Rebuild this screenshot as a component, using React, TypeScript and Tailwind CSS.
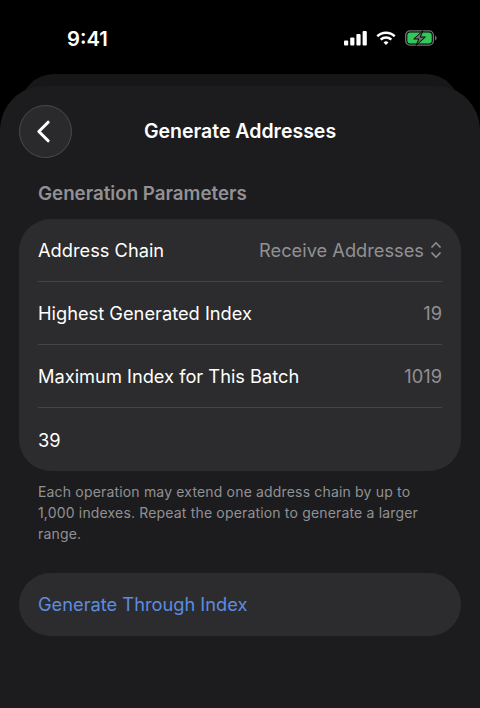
import { ChevronLeft } from "lucide-react";

function StatusBar() {
  return (
    <div className="flex h-[74px] items-start justify-between pl-[67px] pr-[43px] pt-[26px]">
      <span className="text-[20.25px] font-semibold leading-[26px] text-white">9:41</span>
      <div className="mt-[4px] flex items-center gap-[9px]">
        <svg width="23" height="15" viewBox="0 0 23 15" fill="white">
          <rect x="0" y="9.5" width="4.2" height="5" rx="1" />
          <rect x="6.2" y="6.5" width="4.2" height="8" rx="1" />
          <rect x="12.4" y="3" width="4.2" height="11.5" rx="1" />
          <rect x="18.6" y="0" width="4.2" height="14.5" rx="1" />
        </svg>
        <svg width="20" height="15" viewBox="0 0 21 16" fill="none" stroke="white" strokeWidth="2.6">
          <path d="M1.2 5.6a13.5 13.5 0 0 1 18.6 0" />
          <path d="M4.8 9.2a8.4 8.4 0 0 1 11.4 0" />
          <path d="M10.5 15 7.9 12.3a3.7 3.7 0 0 1 5.2 0Z" fill="white" stroke="none" />
        </svg>
        <svg width="32" height="16" viewBox="0 0 33 16" fill="none">
          <rect x="0.7" y="0.7" width="28.6" height="14.6" rx="4.4" stroke="#6f7571" strokeWidth="1.3" />
          <rect x="2.4" y="2.4" width="25.2" height="11.2" rx="3" fill="#34c759" />
          <path d="M31 5.5c1 .4 1.6 1.3 1.6 2.5s-.6 2.1-1.6 2.5Z" fill="#6f7571" />
          <path d="M18.5 0.5 9 9h5.2l-2.7 6.5L21 7h-5.2Z" fill="#6a6f6c" stroke="#000" strokeWidth="1" />
        </svg>
      </div>
    </div>
  );
}

function Row({ label, value, chevron }: { label: string; value?: string; chevron?: boolean }) {
  return (
    <div className="flex h-[63px] items-center justify-between border-b border-[#454547] last:border-b-0">
      <span className="text-white">{label}</span>
      {value ? (
        <span className="flex items-center gap-[6px] text-[#919194]">
          {value}
          {chevron ? (
            <svg width="12" height="18" viewBox="0 0 12 18" fill="none" stroke="#919194" strokeWidth="1.6">
              <path d="M1.5 6.5 6 1.8l4.5 4.7" />
              <path d="M1.5 11.5 6 16.2l4.5-4.7" />
            </svg>
          ) : null}
        </span>
      ) : null}
    </div>
  );
}

export default function App() {
  return (
    <div
      className="relative h-[708px] w-[480px] overflow-hidden bg-black text-[18.25px] leading-[26px] text-white"
      style={{ fontFamily: "Inter, 'Liberation Sans', sans-serif" }}
    >
      <StatusBar />
      {/* sheet behind the current one */}
      <div className="mx-[20px] h-[40px] rounded-t-[34px] bg-[#171718]" />
      <div className="absolute inset-x-0 bottom-0 top-[86px] rounded-t-[44px] bg-[#1c1c1e] px-[19px]">
        <div className="relative flex h-[91px] items-center justify-center pb-[2px]">
          <button
            type="button"
            className="absolute left-0 top-[19px] flex h-[53px] w-[53px] items-center justify-center rounded-full border border-[#4a4a4c] bg-[#2a2a2c]"
          >
            <ChevronLeft className="mr-[5px] h-[37px] w-[37px] text-white" strokeWidth={2} />
          </button>
          <h1 className="text-[19.5px] font-semibold">Generate Addresses</h1>
        </div>
        <h2 className="mb-[12px] mt-[4px] px-[19px] text-[18.75px] font-semibold leading-[26px] text-[#919194]">
          Generation Parameters
        </h2>
        <div className="rounded-[32px] bg-[#2c2c2e] px-[19px]">
          <Row label="Address Chain" value="Receive Addresses" chevron />
          <Row label="Highest Generated Index" value="19" />
          <Row label="Maximum Index for This Batch" value="1019" />
          <Row label="39" />
        </div>
        <p className="mt-[10px] px-[19px] text-[14px] leading-[21px] tracking-[0.17px] text-[#919194]">
          Each operation may extend one address chain by up to 1,000 indexes. Repeat the operation to generate a larger
          range.
        </p>
        <button
          type="button"
          className="mt-[29px] flex h-[63px] w-full items-center rounded-[32px] bg-[#2c2c2e] px-[19px] pb-[2px] text-[#5d8ce0]"
        >
          Generate Through Index
        </button>
      </div>
    </div>
  );
}
